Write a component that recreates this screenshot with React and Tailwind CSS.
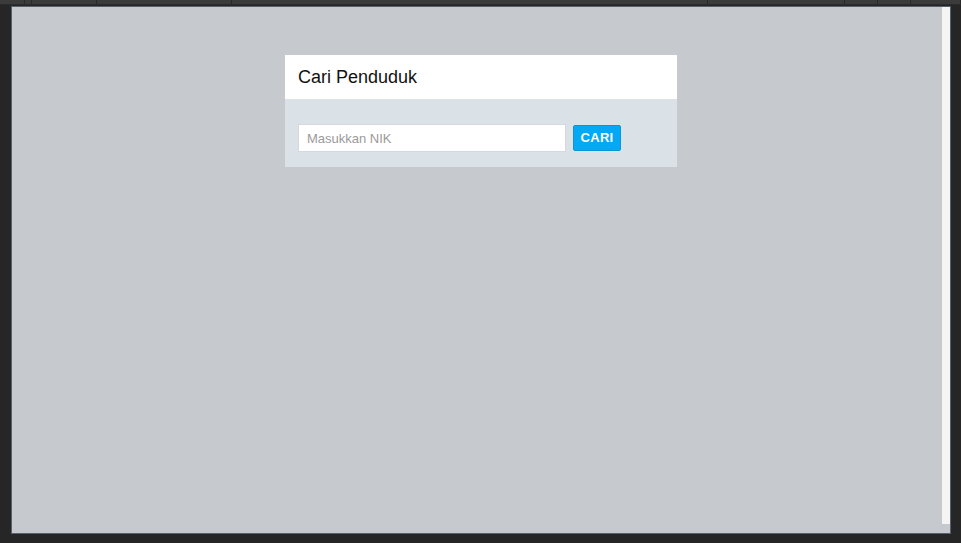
import React from 'react'

const segments = [25, 7, 65, 135, 476, 137, 33, 33, 50]

const App = () => {
  return (
    <div className="w-[961px] h-[543px] bg-[#262626] flex flex-col overflow-hidden" style={{ fontFamily: '"Liberation Sans", Arial, sans-serif' }}>
      {/* top strip */}
      <div className="h-[5px] flex bg-[#3b3b3b] border-b border-[#2c2c2c]">
        {segments.map((w, i) => (
          <div key={i} className="h-full border-r border-[#2a2a2a]" style={{ width: w }} />
        ))}
      </div>

      <div className="flex pl-[11px] pt-[1px]">
        <div className="w-[940px] h-[528px] border border-[#56606e] bg-[#c6c9ce] flex">
          <div className="flex-1 pt-[48px] pl-[273px]">
            {/* card */}
            <div className="w-[392px]">
              <div className="h-[44px] bg-white flex items-center px-[13px]">
                <h2 className="text-[18px] text-[#111]">Cari Penduduk</h2>
              </div>
              <div className="h-[68px] bg-[#dae1e7] flex items-center px-[13px] pt-[10px] gap-[7px]">
                <input
                  type="text"
                  placeholder="Masukkan NIK"
                  className="w-[268px] h-[28px] bg-white border border-[#d5d8dc] px-[8px] text-[13px] text-[#333] placeholder:text-[#9a9a9a] outline-none"
                />
                <button className="w-[48px] h-[26px] bg-[#03a9f4] text-white text-[13px] font-bold tracking-wide rounded-[2px] border border-[#0a97d6]">
                  CARI
                </button>
              </div>
            </div>
          </div>
          {/* scrollbar */}
          <div className="w-[8px] h-[517px] bg-[#f4f4f5]" />
        </div>
      </div>
    </div>
  )
}

export default App
